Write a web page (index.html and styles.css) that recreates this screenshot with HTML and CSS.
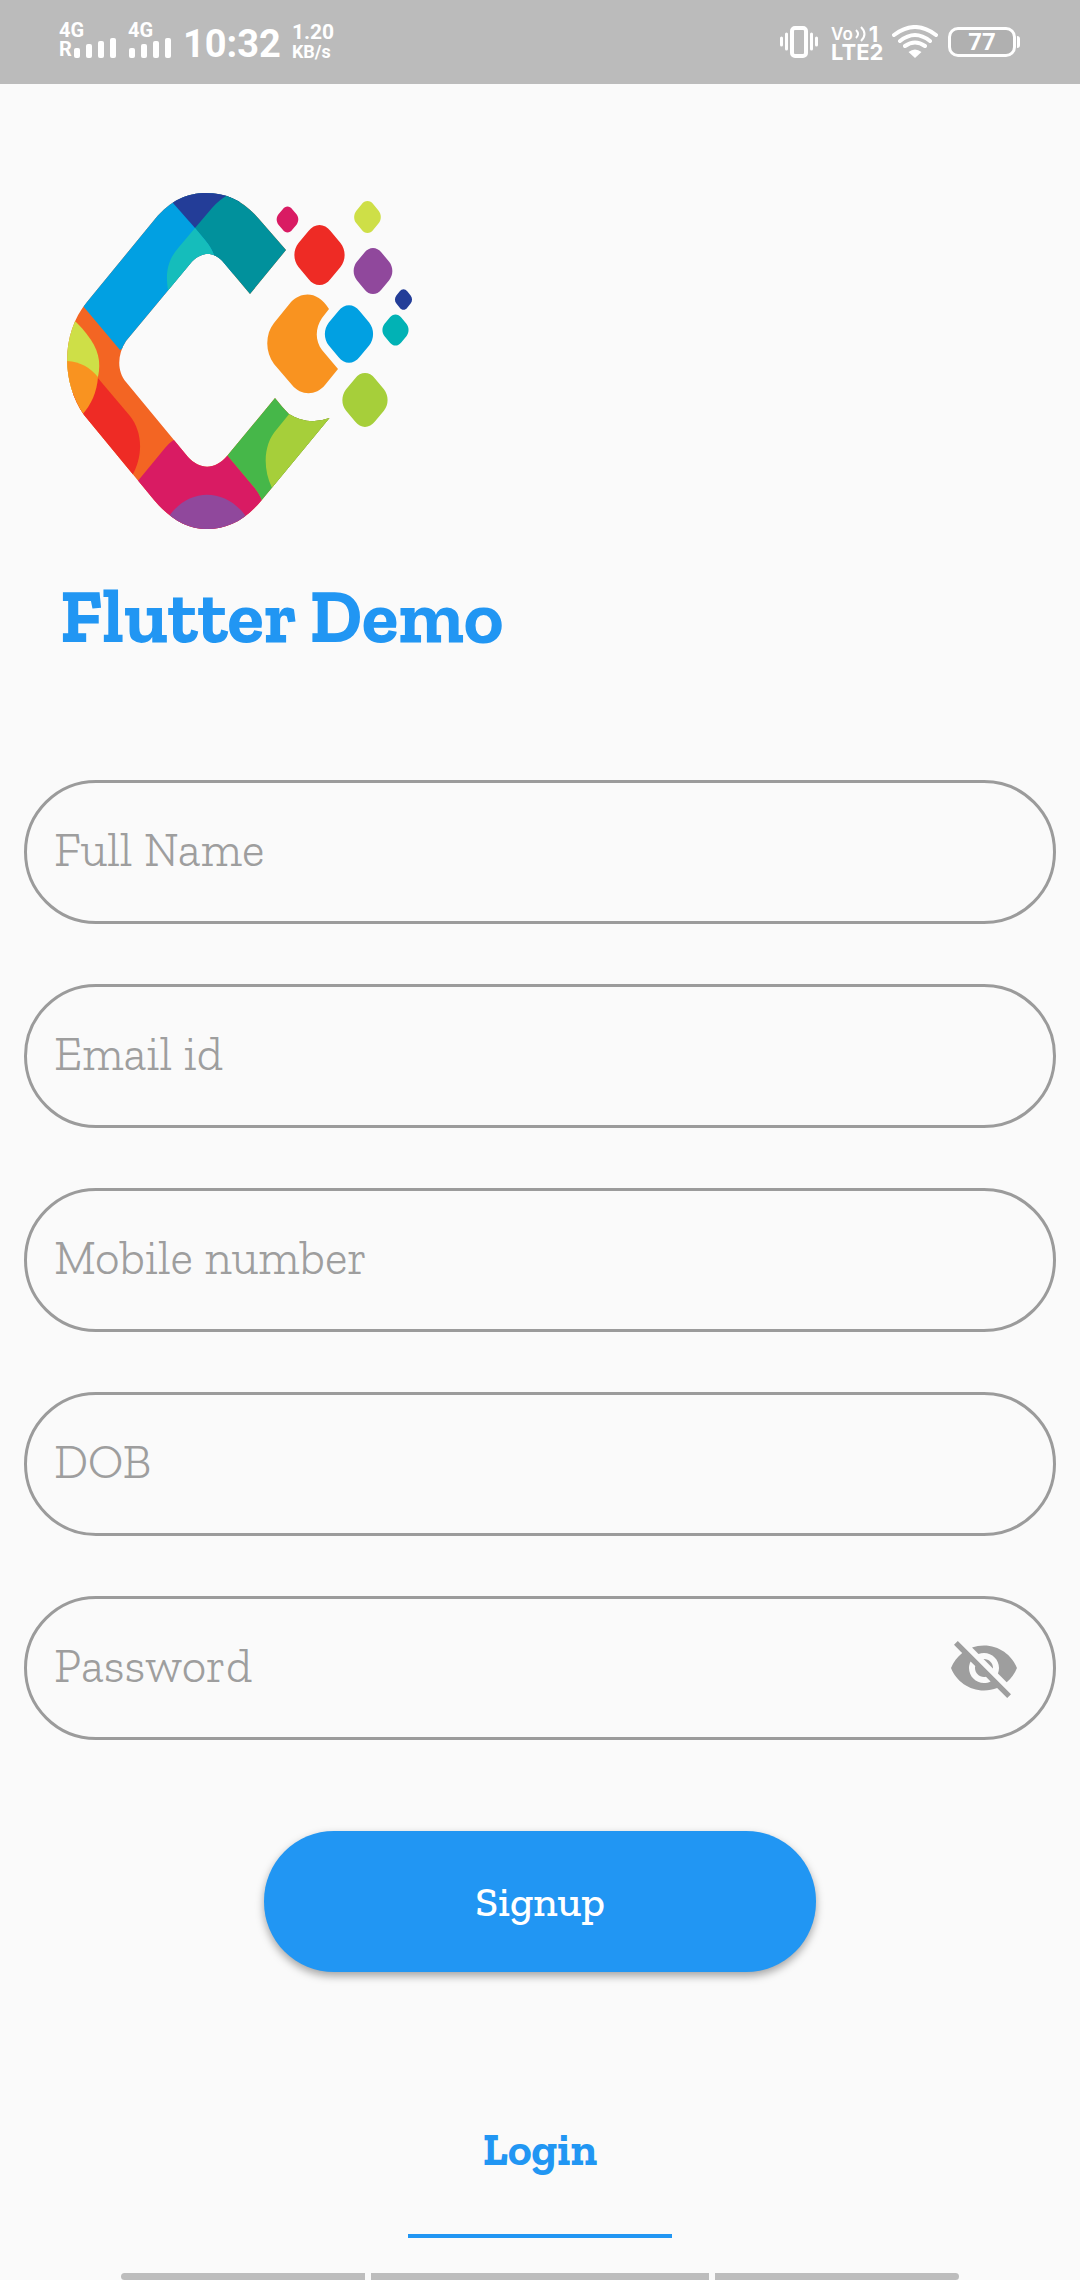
FILE: index.html
```html
<!DOCTYPE html>
<html lang="en">
<head>
<meta charset="utf-8">
<meta name="viewport" content="width=device-width, initial-scale=1">
<title>Flutter Demo</title>
<link rel="stylesheet" href="styles.css">
</head>
<body>
<header class="status-bar">
  <div class="status-group">
    <div class="signal">
      <span class="signal-type">4G</span>
      <div class="signal-row">
        <span class="roaming">R</span>
        <svg width="43" height="20" viewBox="0 0 43 20" fill="#fff" aria-hidden="true"><rect y="10" width="6" height="10" rx="2"/><rect x="12" y="6" width="6" height="14" rx="2"/><rect x="24" y="3" width="6" height="17" rx="2"/><rect x="36" width="6" height="20" rx="2"/></svg>
      </div>
    </div>
    <div class="signal">
      <span class="signal-type">4G</span>
      <div class="signal-row">
        <svg width="44" height="20" viewBox="-1 0 44 20" fill="#fff" aria-hidden="true"><rect y="10" width="6" height="10" rx="2"/><rect x="12" y="6" width="6" height="14" rx="2"/><rect x="24" y="3" width="6" height="17" rx="2"/><rect x="36" width="6" height="20" rx="2"/></svg>
      </div>
    </div>
    <time class="clock">10:32</time>
    <div class="speed"><span class="speed-value">1.20</span><span class="speed-unit">KB/s</span></div>
  </div>
  <div class="status-group status-right">
    <svg class="vibrate" width="38" height="34" viewBox="0 0 38 34" fill="none" stroke="#fff" stroke-linecap="round" aria-hidden="true"><rect x="12" y="3" width="14" height="28" rx="3" stroke-width="4"/><path d="M1.500 13v7M36.500 13v7M6.500 9v15M31.500 9v15" stroke-width="3"/></svg>
    <div class="volte">
      <div class="volte-row volte-top"><span class="vo">Vo</span><svg width="12" height="18" viewBox="0 0 12 18" fill="none" stroke="#fff" stroke-width="2" aria-hidden="true"><path d="M1 5q4 4 0 8M6 2q7 7 0 14"/></svg><span>1</span></div>
      <div class="volte-row">LTE2</div>
    </div>
    <svg width="46" height="34" viewBox="0 0 46 34" fill="none" stroke="#fff" stroke-width="4" stroke-linecap="round" aria-hidden="true"><path d="M2 10Q23-6 44 10M8 16Q23 4 38 16M13 21Q23 14 33 21"/><path d="M16.500 27Q23 22 29.500 27L23 33Z" fill="#fff" stroke="none"/></svg>
    <div class="battery"><span class="battery-level">77</span><span class="battery-tip"></span></div>
  </div>
</header>

<main class="screen">
  <svg class="logo" viewBox="60 187 360 348" role="img" aria-label="Company logo">
    <defs>
      <clipPath id="ring"><path d="M286 250L259 219C243 200 226 193 206 193C187 193 171 200 155 219L87 302C61 333 61 382 84 415L154 500C170 519 187 529 207 529C228 529 245 520 261 501L329.500 418Q308 426 289 414Q282 407 275 398L227 456C215 470 200 470 188 457L126 382C117 371 117 355 126 341L190 264C201 251 214 251 224 263L250 294Z"/></clipPath>
      <path id="gem" d="M-11-24C-5-32 5-32 11-24L21-12C26.500-5 26.500 5 21 12L11 24C5 32-5 32-11 24L-21 12C-26.500 5-26.500-5-21-12Z"/>
    </defs>
    <g clip-path="url(#ring)">
      <path fill="#f36523" d="M60 187h360v348H60Z"/>
      <path fill="#01a0e2" d="M83 306L120 350L240 270V187H60V306Z"/>
      <path fill="#233d98" d="M173 203L195 228L240 220V187H160Z"/>
      <path fill="#01919c" d="M195 228L212 208Q220 199 228 195L240 187H300V310H240L214 256Q213 250 205 240Z"/>
      <path fill="#15bdbb" d="M195 228L179 247C168 259 165 273 168 290L190 290L215 258Q212 248 205 240Z"/>
      <path fill="#cedf47" d="M76 322C97 343 102 358 98 377L60 400V310Z"/>
      <path fill="#ee2b25" d="M97 377L130 416C142 431 144 455 132 476L80 480L60 400Z"/>
      <path fill="#f99320" d="M60 361C77 360 89 366 98 377C97 392 91 405 82 415L60 410Z"/>
      <path fill="#d91b63" d="M137 482L165 448Q170 442 174 440L200 430L227 455L253 486Q260 494 262 501L240 540H130Z"/>
      <path fill="#90489c" d="M166 521C186 486 228 486 249 521L230 535H180Z"/>
      <path fill="#46b749" d="M227 455L253 486Q260 494 262 501L345 440V380H270Z"/>
      <path fill="#a6cf3a" d="M290 413L277 429C264 443 262 467 272 488L345 450V390Z"/>
    </g>
    <path fill="#f99320" d="M329 309C318 291 302 291 291 302L274 323C265 334 265 352 274 364L292 385C301 396 316 396 325 385L338 369L322 350C315 341 315 328 322 318Z"/>
    <use href="#gem" fill="#d91b63" transform="translate(287.500 219.500) scale(.43)"/>
    <use href="#gem" fill="#ee2b25" transform="translate(319.500 255)"/>
    <use href="#gem" fill="#cedf47" transform="translate(367.500 217) scale(.53)"/>
    <use href="#gem" fill="#90489c" transform="translate(373 271) scale(.77)"/>
    <use href="#gem" fill="#233d98" transform="translate(403.500 299.500) scale(.34)"/>
    <use href="#gem" fill="#01b2b5" transform="translate(395.500 330) scale(.52)"/>
    <use href="#gem" fill="#01a0e2" transform="translate(349 334) scale(.96)"/>
    <use href="#gem" fill="#a6cf3a" transform="translate(365 400) scale(.9)"/>
  </svg>
  <h1 class="title">Flutter Demo</h1>

  <form class="form">
    <div class="field"><input type="text" aria-label="Full Name" placeholder="Full Name"></div>
    <div class="field"><input type="email" aria-label="Email id" placeholder="Email id"></div>
    <div class="field"><input type="tel" aria-label="Mobile number" placeholder="Mobile number"></div>
    <div class="field"><input type="text" aria-label="DOB" placeholder="DOB"></div>
    <div class="field">
      <input type="password" aria-label="Password" placeholder="Password">
      <button class="toggle" type="button" aria-label="Show password"><svg width="72" height="72" viewBox="0 0 24 24" fill="#9e9e9e" aria-hidden="true"><path d="M12 7c2.760 0 5 2.240 5 5 0 .65-.13 1.260-.36 1.830l2.920 2.920c1.510-1.260 2.700-2.890 3.430-4.750-1.730-4.390-6-7.500-11-7.500-1.400 0-2.740.25-3.980.7l2.160 2.160C10.740 7.130 11.350 7 12 7zM2 4.270l2.280 2.280.46.46C3.080 8.300 1.780 10.020 1 12c1.730 4.390 6 7.500 11 7.500 1.550 0 3.030-.3 4.380-.84l.42.42L19.730 22 21 20.730 3.270 3 2 4.270zM7.530 9.800l1.550 1.550c-.05.21-.08.43-.08.65 0 1.660 1.340 3 3 3 .22 0 .44-.03.65-.08l1.550 1.550c-.67.33-1.410.53-2.200.53-2.760 0-5-2.240-5-5 0-.79.2-1.530.53-2.200zm4.310-.78l3.150 3.150.02-.16c0-1.660-1.340-3-3-3l-.17.01z"/></svg></button>
    </div>
    <button class="signup" type="submit">Signup</button>
  </form>
  <a class="login" href="#login">Login</a>
</main>

<div class="gesture-bar"><span></span><span></span><span></span></div>
</body>
</html>
```
FILE: styles.css
```css
* {
  box-sizing: border-box;
}

body {
  margin: 0;
  min-height: 100vh;
  display: flex;
  flex-direction: column;
  background: #fafafa;
  font-family: "Zilla Slab", "Liberation Serif", serif;
}

svg {
  display: block;
}

.status-bar {
  display: flex;
  justify-content: space-between;
  height: 84px;
  padding: 21px 60px 0 59px;
  background: #bbb;
  color: #fff;
  font-family: Roboto, sans-serif;
  font-weight: 700;
}

.status-group {
  display: flex;
  align-items: flex-start;
  gap: 11px;
}

.signal {
  display: flex;
  flex-direction: column;
  font-size: 20px;
  line-height: 18px;
}

.signal-type {
  height: 17px;
}

.signal-row {
  display: flex;
  align-items: flex-end;
}

.roaming {
  width: 15px;
  height: 18px;
}

.clock {
  font-size: 38px;
  line-height: 46px;
}

.speed {
  display: flex;
  flex-direction: column;
}

.speed-value {
  font-size: 21px;
  line-height: 23px;
}

.speed-unit {
  font-size: 18px;
  line-height: 16px;
}

.status-right {
  gap: 10px;
  padding-top: 4px;
}

.volte {
  width: 51px;
  margin-left: 3px;
  font-family: Inter, sans-serif;
  font-size: 22px;
  font-weight: 700;
  line-height: 18px;
}

.volte-row {
  display: flex;
}

.volte-top {
  gap: 2px;
}

.vo {
  font-size: 17px;
  font-weight: 600;
}

.battery {
  display: flex;
  align-items: center;
  gap: 1px;
  margin-top: 2px;
}

.battery-level {
  width: 68px;
  height: 30px;
  border: 3px solid #fff;
  border-radius: 10px;
  background: #b0b0b0;
  font-size: 24px;
  line-height: 24px;
  text-align: center;
}

.battery-tip {
  width: 3px;
  height: 12px;
  border-radius: 0 3px 3px 0;
  background: #fff;
}

.screen {
  display: flex;
  flex-direction: column;
  padding: 103px 24px 0;
}

.logo {
  width: 360px;
  height: 348px;
  margin-left: 36px;
}

.title {
  margin: 39px 0 122px 36px;
  color: #2196f3;
  font-size: 75px;
  font-weight: 700;
  line-height: 84px;
}

.form {
  display: flex;
  flex-direction: column;
  gap: 60px;
}

.field {
  display: flex;
  align-items: center;
  height: 144px;
  padding: 0 33px 0 27px;
  border: 3px solid #9b9b9b;
  border-radius: 72px;
}

.field input {
  flex: 1;
  min-width: 0;
  padding: 0 0 4px;
  border: 0;
  outline: 0;
  background: transparent;
  color: #333;
  font: 300 48px/56px "Zilla Slab", "Liberation Serif", serif;
}

.field input::placeholder {
  color: #9e9e9e;
  opacity: 1;
}

.toggle {
  padding: 0;
  border: 0;
  background: none;
}

.signup {
  align-self: center;
  width: 552px;
  height: 141px;
  margin-top: 31px;
  border: 0;
  border-radius: 70px;
  background: #2196f3;
  box-shadow: 0 4px 8px rgba(0, 0, 0, 0.35);
  color: #fff;
  font: 500 42px/50px "Zilla Slab", "Liberation Serif", serif;
}

.login {
  align-self: center;
  width: 264px;
  margin-top: 153px;
  padding-bottom: 59px;
  border-bottom: 4px solid #2196f3;
  color: #2196f3;
  font-size: 45px;
  font-weight: 700;
  line-height: 50px;
  text-align: center;
  text-decoration: none;
}

.gesture-bar {
  display: grid;
  grid-template-columns: 244fr 338fr 244fr;
  gap: 6px;
  height: 7px;
  margin: auto 121px 0;
  border-radius: 4px;
  overflow: hidden;
}

.gesture-bar span {
  background: #bdbdbd;
}
```
